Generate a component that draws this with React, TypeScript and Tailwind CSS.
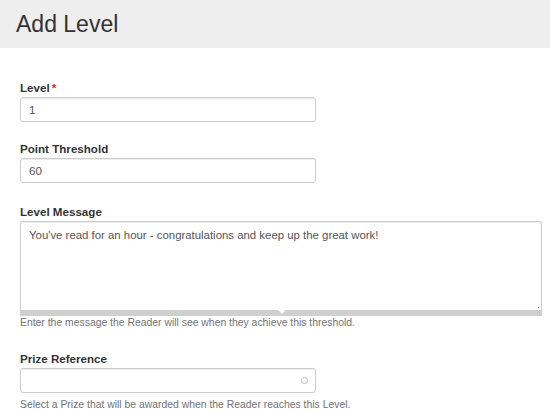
import React from "react";

const font = { fontFamily: '"Liberation Sans", Arial, sans-serif' };

function Label({ children, required }: { children: React.ReactNode; required?: boolean }) {
  return (
    <div className="text-[11.6px] leading-[15px] font-bold text-[#333333] mb-[2px]">
      {children}
      {required && <span className="text-[#e02020] ml-[2px]">*</span>}
    </div>
  );
}

export default function App() {
  return (
    <div className="w-[550px] h-[411px] bg-white overflow-hidden" style={font}>
      <div className="h-[48px] bg-[#eeeeee] flex items-center pl-[16px]">
        <h1 className="text-[23px] text-[#333333] font-normal">Add Level</h1>
      </div>
      <div className="px-[20px] pt-[32px]">
        <Label required>Level</Label>
        <div className="w-[296px] h-[25px] border border-[#cccccc] rounded-[3px] shadow-[inset_0_1px_1px_rgba(0,0,0,0.075)] flex items-center px-[8px] text-[11.6px] text-[#555555]">
          1
        </div>

        <div className="mt-[19px]">
          <Label>Point Threshold</Label>
          <div className="w-[296px] h-[25px] border border-[#cccccc] rounded-[3px] shadow-[inset_0_1px_1px_rgba(0,0,0,0.075)] flex items-center px-[8px] text-[11.6px] text-[#555555]">
            60
          </div>
        </div>

        <div className="mt-[21px]">
          <Label>Level Message</Label>
          <div className="w-[522px]">
            <div className="relative h-[89px] border border-[#cccccc] border-b-0 rounded-t-[3px] shadow-[inset_0_1px_1px_rgba(0,0,0,0.075)] px-[8px] pt-[5px] text-[11.4px] leading-[16px] text-[#555555]">
              You've read for an hour - congratulations and keep up the great work!
              <svg className="absolute right-[1px] bottom-[1px]" width="4" height="4" viewBox="0 0 4 4">
                <rect x="2" y="2" width="1" height="1" fill="#888" />
              </svg>
            </div>
            <div className="h-[6px] bg-[#cfcfcf] flex justify-center">
              <svg className="ml-[2px]" width="8" height="4" viewBox="0 0 8 4">
                <polygon points="0,0 8,0 4,4" fill="#ffffff" />
              </svg>
            </div>
          </div>
          <div className="mt-[1px] text-[10.4px] leading-[12px] text-[#737373]">
            Enter the message the Reader will see when they achieve this threshold.
          </div>
        </div>

        <div className="mt-[22px]">
          <Label>Prize Reference</Label>
          <div className="w-[296px] h-[25px] border border-[#cccccc] rounded-[3px] shadow-[inset_0_1px_1px_rgba(0,0,0,0.075)] flex items-center justify-end pr-[7px]">
            <div className="w-[7px] h-[7px] rounded-full border-[1.5px] border-[#bbbbbb]" />
          </div>
          <div className="mt-[6px] text-[10.4px] leading-[12px] text-[#737373]">
            Select a Prize that will be awarded when the Reader reaches this Level.
          </div>
        </div>
      </div>
    </div>
  );
}
